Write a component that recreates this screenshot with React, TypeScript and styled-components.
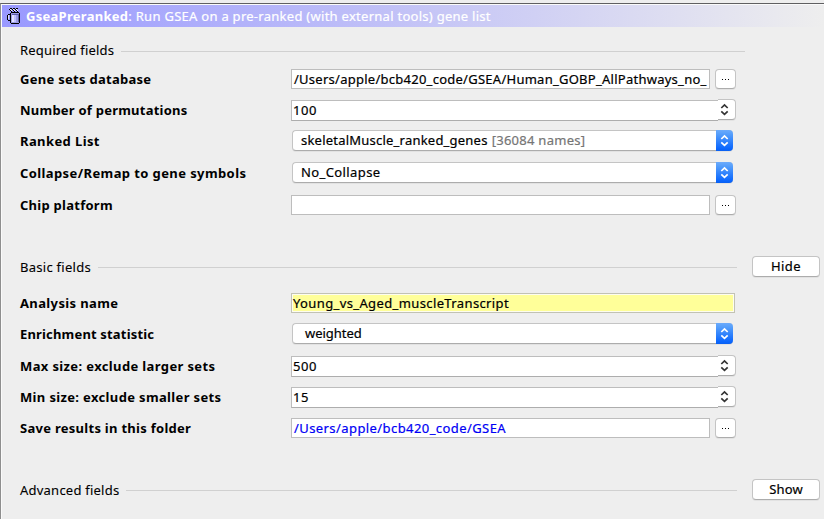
import React from "react";
import styled, { createGlobalStyle, css } from "styled-components";

const GlobalStyle = createGlobalStyle`
  * { box-sizing: border-box; }
  body {
    margin: 0;
    overflow: hidden;
    background: #eeeeee;
    color: #000;
    font: 13px/21px "Noto Sans", "Open Sans", sans-serif;
  }
`;

const Window = styled.main`
  width: 824px;
  height: 516px;
  margin-top: 3px;
  border-top: 1px solid #5f5f61;
  border-left: 1px solid #8e8e8e;
  background: #eeeeee;
  box-shadow: inset 1px 1px 0 #fafafa;
  padding: 1px 0 0 1px;
`;

const TitleBar = styled.header`
  display: flex;
  align-items: center;
  height: 22px;
  padding-left: 4px;
  background: linear-gradient(to right, #9999ff, #eeeeee);
  color: #fff;
`;

const TitleText = styled.div`
  margin-left: 4px;
  line-height: 20px;
  white-space: pre;
`;

const Body = styled.div`
  padding: 13px 4px 0 18px;
`;

const Text = styled.span<{ $track?: number; $muted?: boolean }>`
  letter-spacing: ${(p) => p.$track ?? 0.25}px;
  white-space: pre;
  -webkit-text-stroke: 0.2px currentColor;
  ${(p) => p.$muted && css`color: #757575;`}
`;

const Strong = styled(Text)<{ $drop?: boolean }>`
  font-weight: 700;
  -webkit-text-stroke: 0;
  padding-top: ${(p) => (p.$drop ? 1 : 0)}px;
`;

const SectionHead = styled.div<{ $gap?: number }>`
  display: flex;
  align-items: center;
  height: 21px;
  margin-top: ${(p) => p.$gap ?? 0}px;
`;

const SectionName = styled(Text)<{ $drop?: boolean }>`
  padding-top: ${(p) => (p.$drop ? 2 : 0)}px;
  -webkit-text-stroke: 0.1px currentColor;
`;

const Rule = styled.div<{ $end: number; $drop?: boolean }>`
  flex: 1;
  height: 1px;
  margin: ${(p) => (p.$drop ? 2 : 1)}px ${(p) => p.$end}px 0 7px;
  background: #d0d0d0;
`;

const Row = styled.div<{ $gap: number }>`
  display: grid;
  grid-template-columns: 271px 445px;
  height: 21px;
  margin-top: ${(p) => p.$gap}px;
`;

const Cell = styled.div`
  display: flex;
  align-items: flex-start;
`;

const Field = styled.div<{ $blue?: boolean }>`
  flex: 1;
  min-width: 0;
  height: 20px;
  border: 1px solid #bdbdbd;
  background: #fff;
  padding-left: 2px;
  line-height: 19px;
  overflow: hidden;
  color: ${(p) => (p.$blue ? "#0000f5" : "#000")};
`;

const HighlightField = styled(Field)`
  margin-right: 1px;
  border-color: #c2c2b4;
  background: #ffff99;
  box-shadow: inset 0 0 0 1px #fdfdf0;
  padding-left: 1px;
`;

const buttonFace = css`
  border: 1px solid #c4c4c4;
  border-bottom-color: #acacac;
  background: #fff;
  box-shadow: 0 1px 0 #e2e2e2;
`;

const BrowseButton = styled.button`
  ${buttonFace}
  display: flex;
  align-items: center;
  justify-content: center;
  width: 21px;
  height: 20px;
  margin-left: 5px;
  padding: 0;
  border-radius: 4px;
`;

const ToggleButton = styled.button`
  ${buttonFace}
  width: 68px;
  height: 21px;
  padding: 0;
  border-radius: 4px;
  color: #000;
  font: inherit;
  line-height: 19px;
`;

const SpinnerField = styled(Field)`
  height: 21px;
  border-right: 0;
  border-bottom-color: #adadad;
  padding-left: 1px;
  line-height: 19px;
`;

const SpinnerArrows = styled.div`
  ${buttonFace}
  display: flex;
  align-items: center;
  justify-content: center;
  width: 18px;
  height: 21px;
  margin-top: -1px;
  border-left: 0;
  border-radius: 0 4px 4px 0;
  padding-right: 4px;
`;

const Select = styled.div<{ $indent?: number }>`
  ${buttonFace}
  display: flex;
  justify-content: space-between;
  width: 441px;
  height: 21px;
  margin-left: 1px;
  padding-left: ${(p) => p.$indent ?? 8}px;
  border-right: 0;
  border-radius: 4px;
  line-height: 19px;
`;

const SelectArrows = styled.div`
  display: flex;
  align-items: center;
  justify-content: center;
  width: 17px;
  height: 21px;
  margin-top: -1px;
  border-radius: 0 4px 4px 0;
  background: linear-gradient(#6cabfb 0, #559efb 20%, #0a66fe 90%, #0a60f0);
`;

const Gap = styled.span`
  display: inline-block;
  width: 4px;
`;

function Chevrons({ color }: { color: string }) {
  return (
    <svg width="9" height="13" viewBox="0 0 9 13" fill="none" stroke={color} strokeWidth="1.7">
      <path d="M1.3 5 4.5 1.9 7.7 5M1.3 8.3 4.5 11.4 7.7 8.3" />
    </svg>
  );
}

function Dots() {
  return (
    <svg width="9" height="4" viewBox="0 0 9 4" fill="#000">
      <path d="M1 2h1v1H1zM4 2h1v1H4zM7 2h1v1H7z" />
    </svg>
  );
}

function Mug() {
  return (
    <svg width="16" height="18" viewBox="0 0 16 18" shapeRendering="crispEdges">
      <path fill="#fff" d="M4 2h1v1H4zM7 2h1v1H7zM10 2h1v1h-1zM5 3h1v1H5zM8 3h1v1H8zM11 3h1v1h-1z" />
      <path fill="#000" d="M4 1h2v1H4zM7 1h2v1H7zM10 1h2v1h-2zM3 2h1v1H3zM6 2h1v1H6zM9 2h1v1H9zM4 3h1v1H4zM7 3h1v1H7zM10 3h1v1h-1zM5 4h1v1H5zM8 4h1v1H8zM11 4h1v1h-1z" />
      <path fill="#9c9ce4" d="M5 6h9v10H5z" />
      <path fill="#e4e4ff" d="M6 7h2v8H6z" />
      <path fill="#c0c0ff" d="M8 7h2v8H8z" />
      <path fill="#5c5caa" d="M12 7h1v8h-1zM6 7h7v1H6z" />
      <path fill="#000" d="M5 5h8v1H5zM4 6h1v10H4zM13 6h1v10h-1zM5 16h8v1H5zM2 7h2v1H2zM1 8h1v5H1zM2 13h2v1H2z" />
      <path fill="#dcdcff" d="M2 8h1v4H2z" />
    </svg>
  );
}

function Browse() {
  return (
    <BrowseButton aria-label="Browse">
      <Dots />
    </BrowseButton>
  );
}

function Spinner({ value }: { value: string }) {
  return (
    <Cell>
      <SpinnerField>
        <Text $track={0.6}>{value}</Text>
      </SpinnerField>
      <SpinnerArrows>
        <Chevrons color="#333" />
      </SpinnerArrows>
    </Cell>
  );
}

function Combo({ indent, children }: { indent?: number; children: React.ReactNode }) {
  return (
    <Cell>
      <Select $indent={indent}>
        <div>{children}</div>
        <SelectArrows>
          <Chevrons color="#fff" />
        </SelectArrows>
      </Select>
    </Cell>
  );
}

export default function App() {
  return (
    <>
      <GlobalStyle />
      <Window>
        <TitleBar>
          <Mug />
          <TitleText>
            <Strong $track={0.28}>GseaPreranked</Strong>
            <Text $track={0.275}>: Run GSEA on a pre-ranked (with external tools) gene list</Text>
          </TitleText>
        </TitleBar>
        <Body>
          <SectionHead>
            <SectionName $track={0.18}>Required fields</SectionName>
            <Rule $end={75} />
          </SectionHead>
          <Row $gap={8}>
            <Strong $track={0.28}>Gene sets database</Strong>
            <Cell>
              <Field>
                <Text $track={0.26}>/Users/apple/bcb420_code/GSEA/Human_GOBP_AllPathways_no_</Text>
              </Field>
              <Browse />
            </Cell>
          </Row>
          <Row $gap={10}>
            <Strong $track={0.23}>Number of permutations</Strong>
            <Spinner value="100" />
          </Row>
          <Row $gap={9}>
            <Strong $drop $track={0.4}>Ranked List</Strong>
            <Combo>
              <Text $track={0.22}>skeletalMuscle_ranked_genes</Text>
              <Gap />
              <Text $track={0.27} $muted>[36084 names]</Text>
            </Combo>
          </Row>
          <Row $gap={11}>
            <Strong $drop $track={0.4}>Collapse/Remap to gene symbols</Strong>
            <Combo>
              <Text $track={0.4}>No_Collapse</Text>
            </Combo>
          </Row>
          <Row $gap={12}>
            <Strong $track={0.26}>Chip platform</Strong>
            <Cell>
              <Field />
              <Browse />
            </Cell>
          </Row>

          <SectionHead $gap={40}>
            <SectionName $drop $track={0.27}>Basic fields</SectionName>
            <Rule $drop $end={15} />
            <ToggleButton>
              <Text $track={0.45}>Hide</Text>
            </ToggleButton>
          </SectionHead>
          <Row $gap={16}>
            <Strong $track={0.37}>Analysis name</Strong>
            <Cell>
              <HighlightField>
                <Text $track={0.38}>Young_vs_Aged_muscleTranscript</Text>
              </HighlightField>
            </Cell>
          </Row>
          <Row $gap={9}>
            <Strong $drop $track={0.17}>Enrichment statistic</Strong>
            <Combo indent={12}>
              <Text $track={-0.03}>weighted</Text>
            </Combo>
          </Row>
          <Row $gap={12}>
            <Strong $track={0.37}>Max size: exclude larger sets</Strong>
            <Spinner value="500" />
          </Row>
          <Row $gap={10}>
            <Strong $track={0.35}>Min size: exclude smaller sets</Strong>
            <Spinner value="15" />
          </Row>
          <Row $gap={10}>
            <Strong $track={0.28}>Save results in this folder</Strong>
            <Cell>
              <Field $blue>
                <Text $track={0.42}>/Users/apple/bcb420_code/GSEA</Text>
              </Field>
              <Browse />
            </Cell>
          </Row>

          <SectionHead $gap={40}>
            <SectionName $drop $track={0.23}>Advanced fields</SectionName>
            <Rule $drop $end={15} />
            <ToggleButton>
              <Text $track={0.15}>Show</Text>
            </ToggleButton>
          </SectionHead>
        </Body>
      </Window>
    </>
  );
}
